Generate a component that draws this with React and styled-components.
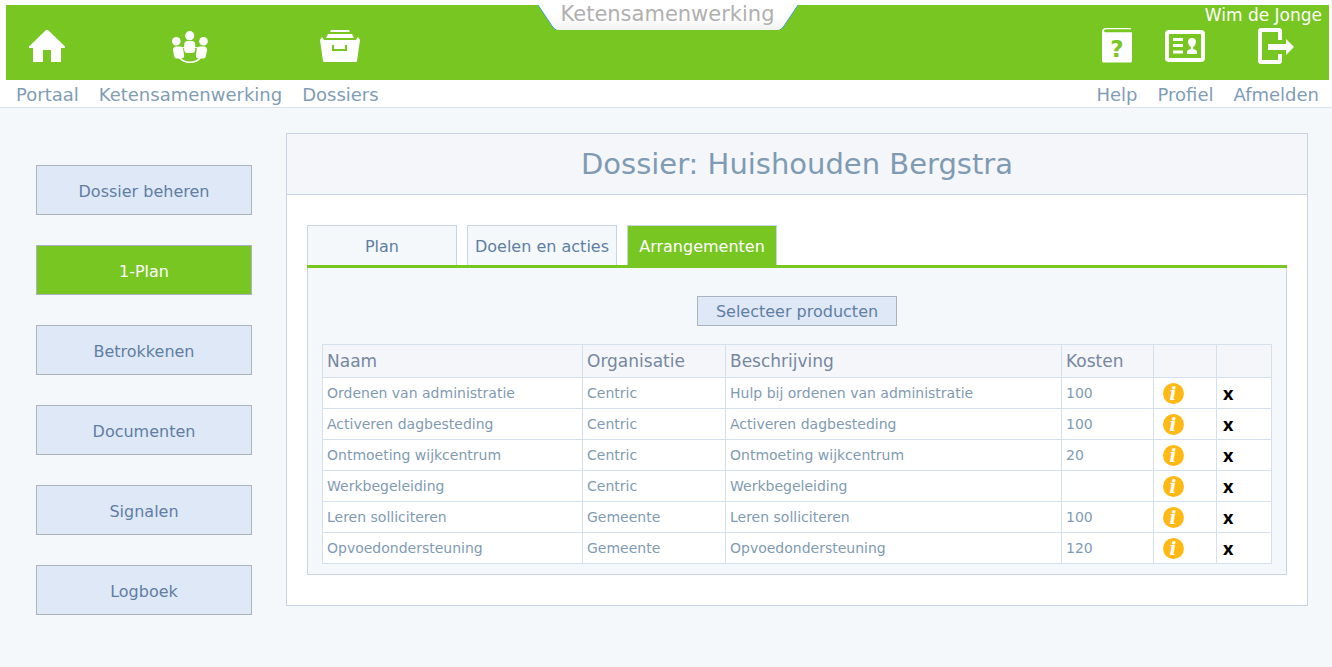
import React, {useState} from "react";
import styled, {createGlobalStyle} from "styled-components";

const GlobalStyle = createGlobalStyle`
  * {
    box-sizing: border-box;
  }

  body {
    margin: 0;
    background-color: #f4f8fb;
    font-family: Verdana, "DejaVu Sans", sans-serif;
    font-size: 16px;
  }

  button {
    font-family: inherit;
    cursor: pointer;
  }
`;

const Header = styled.header`
  padding: 5px 3px 0 6px;
  background-color: white;
  border-bottom: 1px solid #d9e2ec;
`;

const Bar = styled.div`
  display: grid;
  grid-template-columns: 1fr auto 1fr;
  height: 102px;
  background: linear-gradient(#78c622 75px, white 75px);
`;

const Side = styled.div`
  display: flex;
  flex-direction: column;
  justify-content: flex-end;
  align-items: ${props => props.$right ? "flex-end" : "flex-start"};
`;

const UserName = styled.div`
  flex: 1;
  padding-right: 7px;
  color: white;
  font-size: 17px;
  line-height: 20px;
`;

const Nav = styled.nav`
  display: flex;
  gap: 20px;
  padding: 0 10px;
`;

const NavLink = styled.a`
  display: flex;
  flex-direction: column;
  align-items: center;
  color: #7f9db5;
  font-size: 18px;
  line-height: 24px;
  text-decoration: none;

  svg {
    height: 40px;
    margin-bottom: 17px;
    fill: white;
  }
`;

const Banner = styled.div`
  position: relative;
  width: 260px;
  height: 25px;
  color: #b0b0b0;
  font-size: 21px;
  line-height: 18px;
  text-align: center;

  svg {
    position: absolute;
    inset: 0;
  }

  span {
    position: relative;
  }
`;

const Page = styled.div`
  display: flex;
  align-items: flex-start;
  gap: 34px;
  padding: 25px 24px 32px 36px;
`;

const Sidebar = styled.nav`
  display: flex;
  flex-direction: column;
  gap: 30px;
  flex: 0 0 216px;
  padding-top: 32px;
`;

const Button = styled.button`
  height: 50px;
  padding: 2px 18px 0;
  border: 1px solid #a9b4be;
  background-color: ${props => props.$active ? "#78c622" : "#dfe8f7"};
  color: ${props => props.$active ? "white" : "#5f7ea3"};
  font-size: 16px;
`;

const SelectButton = styled(Button)`
  display: block;
  height: 30px;
  min-width: 200px;
  margin: 0 auto 18px;
  padding: 0 18px;
`;

const Panel = styled.main`
  flex: 1;
  min-width: 0;
  border: 1px solid #c9d4e3;
  background-color: white;
`;

const Title = styled.h1`
  margin: 0;
  border-bottom: 1px solid #c9d4e3;
  background-color: #f4f6fa;
  color: #7f9bb3;
  font-size: 29px;
  font-weight: normal;
  line-height: 60px;
  text-align: center;
`;

const PanelBody = styled.div`
  padding: 30px 20px;
`;

const Tabs = styled.div`
  display: flex;
  gap: 10px;
  border-bottom: 3px solid #78c622;
`;

const Tab = styled.button`
  width: 150px;
  height: 40px;
  padding: 2px 0 0;
  border: 1px solid #c9d4e3;
  border-bottom: none;
  background-color: ${props => props.$active ? "#78c622" : "#f4f8fb"};
  color: ${props => props.$active ? "white" : "#5f7ea3"};
  font-size: 16px;
`;

const TabPanel = styled.div`
  padding: 28px 14px 10px;
  border: 1px solid #c9d4e3;
  border-top: none;
  background-color: #f4f8fb;
`;

const Table = styled.table`
  width: 100%;
  table-layout: fixed;
  border-collapse: collapse;
  background-color: white;
  text-align: left;

  th, td {
    padding: 0 4px;
    border: 1px solid #d5e0ed;
  }

  th {
    height: 33px;
    background-color: #f4f6fa;
    color: #7787a0;
    font-size: 17px;
    font-weight: normal;
  }

  td {
    height: 31px;
    color: #7f9bb3;
    font-size: 14px;
  }
`;

const Column = styled.col`
  width: ${props => props.$width}px;
`;

const IconButton = styled.button`
  display: block;
  margin-left: 5px;
  padding: 0;
  border: none;
  background: none;

  svg {
    display: block;
  }
`;

const RemoveButton = styled.button`
  display: block;
  padding: 0 2px;
  border: none;
  background: none;
  color: black;
  font-size: 18px;
  font-weight: bold;
  line-height: 24px;

  button& {
    font-family: "Open Sans", sans-serif;
  }
`;

const HomeIcon = () => (
    <svg width="36" height="40" viewBox="0 0 36 40">
        <path d="M17 4h2l17 16.5V22h-4v14H22V24h-8v12H4V22H0v-1.5z"/>
    </svg>
);

const PeopleIcon = () => (
    <svg width="36" height="40" viewBox="0 0 36 40">
        <path d="M7 31q4 5.300 11 5.300T29 31" fill="none" stroke="white" strokeWidth="1.600"/>
        <path d="M10 22l4-1M26 22l-4-1" stroke="white"/>
        <circle cx="17.700" cy="9.700" r="4.600"/>
        <circle cx="4.300" cy="15.300" r="4.300"/>
        <circle cx="31.500" cy="15.300" r="4.300"/>
        <rect x="12.200" y="15" width="11" height="12" rx="3.500"/>
        <path d="M1 24q0-3.500 3-3.500h4q3 0 3.300 3l.800 6q.2 3-3 3H5q-2.700 0-3-3z"/>
        <path d="M35 24q0-3.500-3-3.500h-4q-3 0-3.300 3l-.8 6q-.2 3 3 3H31q2.700 0 3-3z"/>
    </svg>
);

const DossierIcon = () => (
    <svg width="40" height="40" viewBox="0 0 40 40">
        <path d="M11 4h18l1 2H10zM8 8h24l2 4H6z"/>
        <path d="M2 11l2 3h32l2-3 2 3-3 21q0 1-1 1H4q-1 0-1-1L0 14z"/>
        <path d="M13 19v5h13v-5" fill="none" stroke="#78c622" strokeWidth="2"/>
    </svg>
);

const HelpIcon = () => (
    <svg width="30" height="40" viewBox="0 0 30 40">
        <path d="M4 2h25v1.300H4Q2 3.300 2 4.800t2 1.500H30V35q0 1.500-1.500 1.500h-27Q0 36.500 0 35V6q0-4 4-4z"/>
        <text
            x="15"
            y="31"
            textAnchor="middle"
            fill="#78c622"
            fontFamily="DejaVu Sans, sans-serif"
            fontSize="23"
            fontWeight="bold"
        >
            ?
        </text>
    </svg>
);

const ProfileIcon = () => (
    <svg width="40" height="40" viewBox="0 0 40 40">
        <rect x="2" y="6" width="36" height="28" rx="2" fill="none" stroke="white" strokeWidth="4"/>
        <path d="M8 12h10v3H8zM8 18h10v3H8zM8 24.500h10v3H8z"/>
        <path d="M22 28v-2q0-2 3-2.500 1-.500 1-2-3-3-3-5.500 0-4 4-4t4 4q0 2.500-3 5.500 0 1.500 1 2 3 .5 3 2.500v2z"/>
    </svg>
);

const LogoutIcon = () => (
    <svg width="36" height="40" viewBox="0 0 36 40">
        <path
            d="M22 14V5q0-1-1-1H3Q2 4 2 5v30q0 1 1 1h18q1 0 1-1v-7"
            fill="none"
            stroke="white"
            strokeWidth="4"
        />
        <path d="M10 18h18v-5l8 8-8 8v-5H10z"/>
    </svg>
);

const InfoIcon = () => (
    <svg width="21" height="21" viewBox="0 0 21 21">
        <circle cx="10.500" cy="10.500" r="10.500" fill="#ffb915"/>
        <text
            x="10"
            y="17"
            textAnchor="middle"
            fill="white"
            fontFamily="DejaVu Serif, serif"
            fontSize="18"
            fontStyle="italic"
            fontWeight="bold"
        >
            i
        </text>
    </svg>
);

const mainLinks = [
    {label: "Portaal", Icon: HomeIcon},
    {label: "Ketensamenwerking", Icon: PeopleIcon},
    {label: "Dossiers", Icon: DossierIcon},
];

const userLinks = [
    {label: "Help", Icon: HelpIcon},
    {label: "Profiel", Icon: ProfileIcon},
    {label: "Afmelden", Icon: LogoutIcon},
];

const sections = ["Dossier beheren", "1-Plan", "Betrokkenen", "Documenten", "Signalen", "Logboek"];

const tabs = ["Plan", "Doelen en acties", "Arrangementen"];

const products = [
    {name: "Ordenen van administratie", organisation: "Centric", description: "Hulp bij ordenen van administratie", cost: 100},
    {name: "Activeren dagbesteding", organisation: "Centric", description: "Activeren dagbesteding", cost: 100},
    {name: "Ontmoeting wijkcentrum", organisation: "Centric", description: "Ontmoeting wijkcentrum", cost: 20},
    {name: "Werkbegeleiding", organisation: "Centric", description: "Werkbegeleiding", cost: null},
    {name: "Leren solliciteren", organisation: "Gemeente", description: "Leren solliciteren", cost: 100},
    {name: "Opvoedondersteuning", organisation: "Gemeente", description: "Opvoedondersteuning", cost: 120},
];

const NavLinks = ({links}) => (
    <Nav>
        {links.map(({label, Icon}) => (
            <NavLink href="#" key={label}>
                <Icon/>
                {label}
            </NavLink>
        ))}
    </Nav>
);

const ProductTable = () => (
    <Table>
        <colgroup>
            {[260, 143, 336, 92, 63, 55].map(width => <Column key={width} $width={width}/>)}
        </colgroup>
        <thead>
            <tr>
                <th>Naam</th>
                <th>Organisatie</th>
                <th>Beschrijving</th>
                <th>Kosten</th>
                <th/>
                <th/>
            </tr>
        </thead>
        <tbody>
            {products.map(product => (
                <tr key={product.name}>
                    <td>{product.name}</td>
                    <td>{product.organisation}</td>
                    <td>{product.description}</td>
                    <td>{product.cost}</td>
                    <td>
                        <IconButton aria-label="Informatie"><InfoIcon/></IconButton>
                    </td>
                    <td>
                        <RemoveButton aria-label="Verwijderen">x</RemoveButton>
                    </td>
                </tr>
            ))}
        </tbody>
    </Table>
);

const App = () => {
    const [section, setSection] = useState("1-Plan");
    const [tab, setTab] = useState("Arrangementen");

    return (
        <>
            <GlobalStyle/>
            <Header>
                <Bar>
                    <Side>
                        <NavLinks links={mainLinks}/>
                    </Side>
                    <Banner>
                        <svg width="260" height="25" viewBox="0 0 260 25">
                            <defs>
                                <linearGradient id="banner" x1="0" y1="0" x2="0" y2="1">
                                    <stop offset="0.500" stopColor="white"/>
                                    <stop offset="1" stopColor="#f1f1f1"/>
                                </linearGradient>
                            </defs>
                            <path d="M0 0L14 21q3 4 7 4h218q4 0 7-4L260 0z" fill="url(#banner)"/>
                            <path d="M0 0L14 21q2 3 4 4M260 0l-14 21q-2 3-4 4" fill="none" stroke="#3f9fd0"/>
                        </svg>
                        <span>Ketensamenwerking</span>
                    </Banner>
                    <Side $right>
                        <UserName>Wim de Jonge</UserName>
                        <NavLinks links={userLinks}/>
                    </Side>
                </Bar>
            </Header>
            <Page>
                <Sidebar>
                    {sections.map(name => (
                        <Button key={name} $active={name === section} onClick={() => setSection(name)}>
                            {name}
                        </Button>
                    ))}
                </Sidebar>
                <Panel>
                    <Title>Dossier: Huishouden Bergstra</Title>
                    <PanelBody>
                        <Tabs role="tablist">
                            {tabs.map(name => (
                                <Tab
                                    key={name}
                                    role="tab"
                                    aria-selected={name === tab}
                                    $active={name === tab}
                                    onClick={() => setTab(name)}
                                >
                                    {name}
                                </Tab>
                            ))}
                        </Tabs>
                        <TabPanel role="tabpanel">
                            <SelectButton>Selecteer producten</SelectButton>
                            <ProductTable/>
                        </TabPanel>
                    </PanelBody>
                </Panel>
            </Page>
        </>
    );
};

export default App;
